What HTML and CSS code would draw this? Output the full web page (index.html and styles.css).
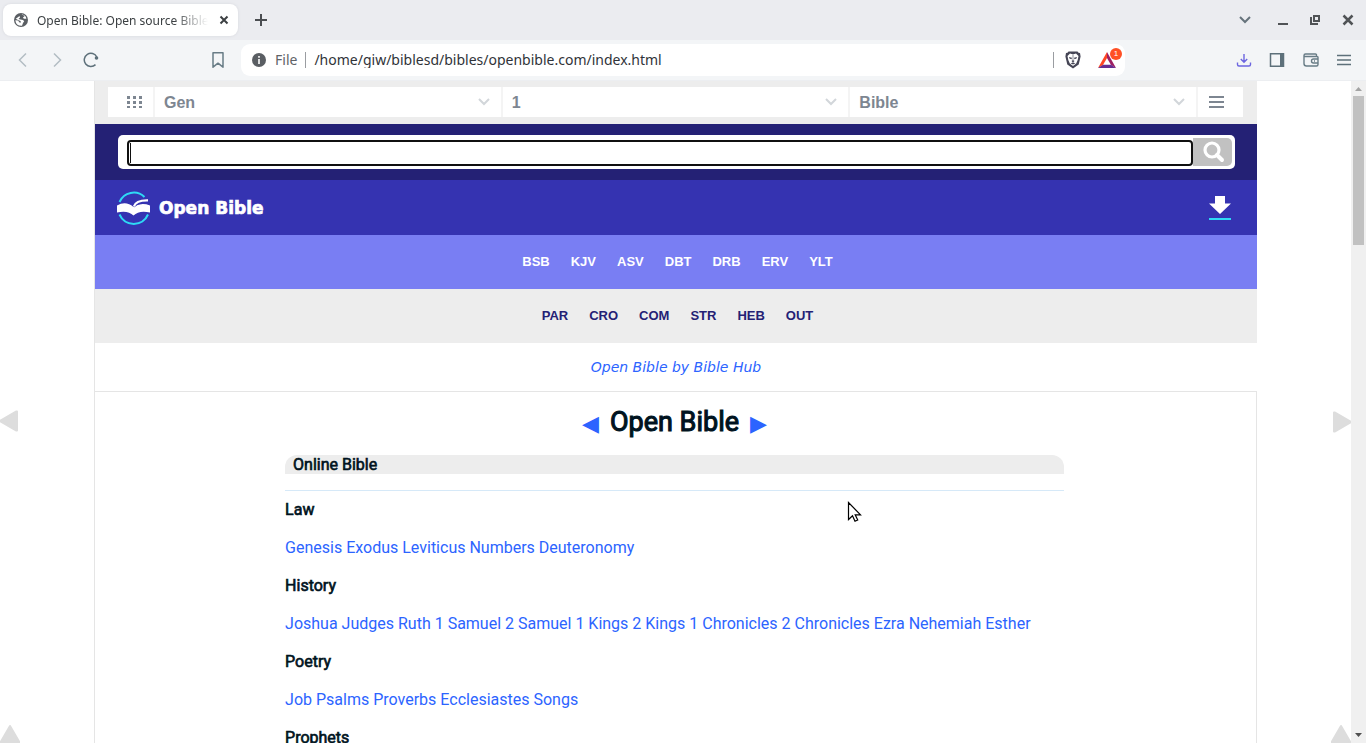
FILE: index.html
```html
<!DOCTYPE html>
<html lang="en">
<head>
<meta charset="utf-8">
<title>Open Bible: Open source Bible</title>
<link rel="stylesheet" href="styles.css">
</head>
<body>
<div class="window">
  <header class="tabs">
    <div class="tab">
      <svg width="16" height="16" viewBox="0 0 16 16"><circle cx="8" cy="8" r="7" fill="#5a5e63"/><path d="M8.500 2.500L6.500 4l.5 1.500L5.500 7l2 .5 2.500.5 1.200 1.200L10 11l-1 2.700Q3 14 2.300 8.200L5 8.500 6.500 10.500 8 10.500 7.500 9 5 8 2.800 6.800" fill="#fff"/><path d="M8.500 2.500l3 1.200c.2 1.300-1.500 1-1.500 2 .1 1 1.800 1 3.300 1.100.1-2-2-4.500-4.800-4.300z" fill="#fff"/></svg>
      <span class="tab-title">Open Bible: Open source Bible</span>
      <button class="icon" aria-label="Close tab"><svg width="10" height="10" viewBox="0 0 10 10" stroke="#3c4043" stroke-width="2"><path d="M1.500 1.500l7 7M8.500 1.500l-7 7"/></svg></button>
    </div>
    <button class="icon new-tab" aria-label="New tab"><svg width="12" height="12" viewBox="0 0 12 12" stroke="#4a4d51" stroke-width="2"><path d="M6 0v12M0 6h12"/></svg></button>
    <div class="window-controls">
      <button class="icon" aria-label="Search tabs"><svg width="12" height="8" viewBox="0 0 12 8" fill="none" stroke="#66737c" stroke-width="2"><path d="M1 1l5 5 5-5"/></svg></button>
      <button class="icon" aria-label="Minimize"><svg width="12" height="12" viewBox="0 0 12 12"><path d="M0 9h10v2H0z" fill="#505356"/></svg></button>
      <button class="icon" aria-label="Restore"><svg width="12" height="12" viewBox="0 0 12 12" fill="none" stroke="#505356" stroke-width="2"><path d="M4 2h5v5H4zM1 3v7h7"/></svg></button>
      <button class="icon" aria-label="Close"><svg width="12" height="12" viewBox="0 0 12 12" stroke="#505356" stroke-width="2.500"><path d="M1.500 1.500l9 9M10.500 1.500l-9 9"/></svg></button>
    </div>
  </header>
  <div class="toolbar">
    <div class="history">
      <button class="icon" aria-label="Back"><svg width="16" height="16" viewBox="0 0 16 16" fill="none" stroke="#b3bdc3" stroke-width="1.500"><path d="M11 1.500L4.500 8l6.500 6.500"/></svg></button>
      <button class="icon" aria-label="Forward"><svg width="16" height="16" viewBox="0 0 16 16" fill="none" stroke="#b3bdc3" stroke-width="1.500"><path d="M5 1.500L11.500 8 5 14.500"/></svg></button>
      <button class="icon" aria-label="Reload"><svg width="16" height="16" viewBox="0 0 16 16" fill="none" stroke="#5d707a" stroke-width="1.500"><path d="M12.500 12.600A6.600 6.600 0 1 1 13.800 5"/><circle cx="13.500" cy="6" r="1.800" fill="#5d707a" stroke="none"/></svg></button>
    </div>
    <button class="icon bookmark" aria-label="Bookmark"><svg width="16" height="18" viewBox="0 0 16 18" fill="none" stroke="#687c86" stroke-width="1.500"><path d="M3 1.800h10v14.400l-5-4-5 4z" stroke-linejoin="round"/></svg></button>
    <div class="address">
      <svg width="14" height="14" viewBox="0 0 14 14"><circle cx="7" cy="7" r="7" fill="#5a5e63"/><path d="M6.200 6h1.600v5H6.200zM6.200 3h1.600v1.800H6.200z" fill="#fff"/></svg>
      <span class="scheme">File</span>
      <input class="url" type="text" aria-label="Address" value="/home/giw/biblesd/bibles/openbible.com/index.html">
      <button class="icon shield" aria-label="Shields"><svg width="16" height="18" viewBox="0 0 16 18"><path d="M3.500.5h9l1 1.200 1.500.4.600 3.400-1.900 8L8 17.500l-5.700-4L.4 5.500 1 2.100l1.500-.4z" fill="#454555"/><path d="M5 2.500l1.500.5h3L11 2.500l2.500 2.500-.8 4-1.500 3.600L8 15l-3.200-2.400L3.300 9l-.8-4z" fill="#fff"/><path d="M4 6l3 .7-.5 1.500L4.500 7.600zM12 6l-3 .7.5 1.500 2-.6zM6.500 10L8 9l1.500 1L8 11.500zM5.500 12.200L8 11.500l2.500.7L8 13.500zM7.700 3h.6v6h-.6z" fill="#454555"/></svg></button>
      <button class="icon rewards" aria-label="Rewards, 1 notification"><svg width="18" height="16" viewBox="0 0 18 16"><path d="M9 0L0 16l5-3 4-7z" fill="#ff4724"/><path d="M9 0l9 16-5-3-4-7z" fill="#9e1f63"/><path d="M0 16h18l-5-3.200H5z" fill="#662d91"/></svg><span class="badge">1</span></button>
    </div>
    <div class="tools">
      <button class="icon" aria-label="Downloads"><svg width="16" height="16" viewBox="0 0 16 16" fill="none" stroke="#6c66e0" stroke-width="1.400"><path d="M8 2v8M4.800 7L8 10.200 11.200 7M1.500 10.500v2q0 1.500 1.500 1.500h10q1.500 0 1.500-1.500v-2"/></svg></button>
      <button class="icon" aria-label="Sidebar"><svg width="16" height="16" viewBox="0 0 16 16"><path d="M1.500 1.700h13v12.600h-13z" fill="none" stroke="#5d707a" stroke-width="1.500"/><path d="M11 1.500h4v13h-4z" fill="#5d707a"/></svg></button>
      <button class="icon" aria-label="Wallet"><svg width="18" height="16" viewBox="0 0 18 16" fill="none" stroke="#687c86" stroke-width="1.400"><path d="M14.500 4.500V3q0-1-1-1H3.500Q2 2 2 3.500v8q0 2.500 2.500 2.500h10q1.500 0 1.500-1.500v-7q0-1-1-1H3.500Q2 4.500 2 3.500M16 7h-4.500q-2 0-2 2t2 2H16M12 9h1"/></svg></button>
      <button class="icon" aria-label="Menu"><svg width="14" height="12" viewBox="0 0 14 12" stroke="#5d707a" stroke-width="1.400"><path d="M0 1.500h14M0 6h14M0 10.500h14"/></svg></button>
    </div>
  </div>

  <div class="viewport">
    <div class="page">
      <div class="column">
        <div class="picker">
          <button class="cell cell-icon" aria-label="Books"><svg width="16" height="14" viewBox="0 0 16 14" fill="#7d8691"><path d="M0 1h3v3H0zM6 1h3v3H6zM12 1h3v3h-3zM0 6h3v3H0zM6 6h3v3H6zM12 6h3v3h-3zM0 11h3v2H0zM6 11h3v2H6zM12 11h3v2h-3z"/></svg></button>
          <label class="cell"><select aria-label="Book"><option>Gen</option></select><svg class="chevron" viewBox="0 0 12 8"><path d="M1 1l5 5 5-5"/></svg></label>
          <label class="cell"><select aria-label="Chapter"><option>1</option></select><svg class="chevron" viewBox="0 0 12 8"><path d="M1 1l5 5 5-5"/></svg></label>
          <label class="cell"><select aria-label="Version"><option>Bible</option></select><svg class="chevron" viewBox="0 0 12 8"><path d="M1 1l5 5 5-5"/></svg></label>
          <button class="cell cell-icon" aria-label="Site menu"><svg width="16" height="14" viewBox="0 0 16 14" fill="#7d8691"><path d="M0 1h15v2H0zM0 6h15v2H0zM0 11h15v2H0z"/></svg></button>
        </div>
        <form class="search">
          <div class="search-box">
            <input type="text" aria-label="Search">
            <button type="button" aria-label="Search"><svg width="22" height="22" viewBox="0 0 22 22" fill="none" stroke="#fff"><circle cx="9" cy="9" r="7" stroke-width="3.200"/><path d="M14 14l5 5" stroke-width="4" stroke-linecap="round"/></svg></button>
          </div>
        </form>
        <div class="brand">
          <a class="logo" href="#">
            <svg width="34" height="34" viewBox="0 0 34 34"><g fill="none" stroke="#2ed9f5" stroke-width="2"><path d="M2.500 11A15.500 15.500 0 0 1 27.500 6M2.500 23.500a15.500 15.500 0 0 0 28.500 0"/></g><path d="M0 14.500Q9 9.500 16.500 16 24 11 33 14.500V21.500Q22 19 16.500 24.500 11 19 0 21.500z" fill="#fff"/><path d="M17 16Q19.500 11.500 31 11.500" fill="none" stroke="#3533b1" stroke-width="1.500"/><path d="M16.800 15.500Q19 9 31 9.300" fill="none" stroke="#fff" stroke-width="2.200"/></svg>
            <span>Open Bible</span>
          </a>
          <a class="download" href="#" aria-label="Download"><svg width="22" height="24" viewBox="0 0 22 24"><path d="M6 0h10v7.500h6L11 18 0 7.500h6z" fill="#fff"/><path d="M0 22h22v2H0z" fill="#2ed9f5"/></svg></a>
        </div>
        <nav class="versions"><a href="#">BSB</a><a href="#">KJV</a><a href="#">ASV</a><a href="#">DBT</a><a href="#">DRB</a><a href="#">ERV</a><a href="#">YLT</a></nav>
        <nav class="versions studies"><a href="#">PAR</a><a href="#">CRO</a><a href="#">COM</a><a href="#">STR</a><a href="#">HEB</a><a href="#">OUT</a></nav>
        <p class="credit"><a href="#">Open Bible by Bible Hub</a></p>
        <main class="content">
          <div class="inner">
            <h1><a href="#">◀</a> Open Bible <a href="#">▶</a></h1>
            <h2>Online Bible</h2>
            <hr>
            <h3>Law</h3>
            <p><a href="#">Genesis</a> <a href="#">Exodus</a> <a href="#">Leviticus</a> <a href="#">Numbers</a> <a href="#">Deuteronomy</a></p>
            <h3>History</h3>
            <p><a href="#">Joshua</a> <a href="#">Judges</a> <a href="#">Ruth</a> <a href="#">1 Samuel</a> <a href="#">2 Samuel</a> <a href="#">1 Kings</a> <a href="#">2 Kings</a> <a href="#">1 Chronicles</a> <a href="#">2 Chronicles</a> <a href="#">Ezra</a> <a href="#">Nehemiah</a> <a href="#">Esther</a></p>
            <h3>Poetry</h3>
            <p><a href="#">Job</a> <a href="#">Psalms</a> <a href="#">Proverbs</a> <a href="#">Ecclesiastes</a> <a href="#">Songs</a></p>
            <h3>Prophets</h3>
          </div>
        </main>
      </div>
      <a class="float prev" href="#" aria-label="Previous"><svg width="18" height="22" viewBox="0 0 18 22"><path d="M0 11L16 1.500h1v19h-1z" fill="#ddd" stroke="#ddd" stroke-width="2" stroke-linejoin="round"/></svg></a>
      <a class="float next" href="#" aria-label="Next"><svg width="18" height="22" viewBox="0 0 18 22"><path d="M18 11L2 1.500H1v19h1z" fill="#ddd" stroke="#ddd" stroke-width="2" stroke-linejoin="round"/></svg></a>
      <a class="float top-left" href="#" aria-label="Top of page"><svg width="20" height="18" viewBox="0 0 20 18"><path d="M10 1L1 16.500V18h18v-1.500z" fill="#ddd" stroke="#ddd" stroke-width="2" stroke-linejoin="round"/></svg></a>
      <a class="float top-right" href="#" aria-label="Top of page"><svg width="20" height="18" viewBox="0 0 20 18"><path d="M10 1L1 16.500V18h18v-1.500z" fill="#ddd" stroke="#ddd" stroke-width="2" stroke-linejoin="round"/></svg></a>
      <svg class="pointer" width="16" height="22" viewBox="0 0 16 22"><path d="M1.500 1.500v17l4-3.800 2.500 5.500 2.700-1.200-2.500-5.200h5.300z" fill="#fff" stroke="#000" stroke-width="1.200"/></svg>
    </div>
    <div class="scrollbar">
      <svg width="15" height="15" viewBox="0 0 15 15"><path d="M4 10h7L7.500 6z" fill="#a3a3a3"/></svg>
      <div class="thumb"></div>
      <svg width="15" height="15" viewBox="0 0 15 15"><path d="M4 5h7L7.500 9z" fill="#505050"/></svg>
    </div>
  </div>
</div>
</body>
</html>
```

FILE: styles.css
```css
* { box-sizing: border-box; }
body { margin: 0; background: #fff; }
svg { display: block; flex: none; }
a { color: #2c64ff; text-decoration: none; }
button { border: 0; background: none; padding: 0; }
.icon { display: grid; place-items: center; flex: none; }

.window { display: flex; flex-direction: column; height: 100vh; overflow: hidden; font-family: "Noto Sans", sans-serif; }

/* Browser tabs */
.tabs { display: flex; align-items: center; height: 40px; padding: 0 12px 0 3px; background: #ebecf0; flex: none; }
.tab { display: flex; align-items: center; width: 235px; height: 32px; padding: 0 9px 0 10px; border-radius: 8px; background: #fff; box-shadow: 0 0 3px #d5d7dc; }
.tab-title { flex: 1; overflow: hidden; white-space: nowrap; margin: 0 11px 0 8px; font-size: 12px; color: #3c4043; -webkit-mask-image: linear-gradient(to right, #000 80%, transparent); mask-image: linear-gradient(to right, #000 80%, transparent); }
.new-tab { margin-left: 17px; }
.window-controls { display: flex; align-items: center; gap: 20px; margin-left: auto; }
.window-controls .icon:first-child { margin-right: 7px; }

/* Browser toolbar */
.toolbar { display: flex; align-items: center; height: 41px; padding: 0 15px; background: #f3f5f7; border-bottom: 1px solid #eceef1; flex: none; }
.history { display: flex; gap: 18px; }
.bookmark { margin-left: 111px; }
.address { display: flex; align-items: center; flex: 1; height: 32px; margin: 0 111px 0 15px; padding: 0 9px 0 11px; border-radius: 9px; background: #fff; }
.scheme { margin: 0 8px 0 9px; padding-right: 8px; border-right: 1px solid #9a9da1; font-size: 14px; line-height: 16px; color: #5f6368; }
.url { flex: 1; min-width: 0; height: 16px; padding: 0 0 2px; border: 0; border-right: 1px solid #9a9da1; font: 14px "Noto Sans", sans-serif; color: #303338; background: none; }
.shield { margin: 0 17px 0 11px; }
.rewards { position: relative; }
.badge { position: absolute; right: -6px; top: -4px; width: 12px; height: 12px; border-radius: 6px; background: #ff5025; color: #fff; font-size: 8px; line-height: 12px; text-align: center; }
.tools { display: flex; align-items: center; gap: 17px; }

/* Viewport */
.viewport { display: flex; flex: 1; min-height: 0; }
.page { position: relative; flex: 1; min-width: 0; padding: 0 94px; overflow: hidden; }
.column { min-height: 100%; border-left: 1px solid #e5e5e5; }
.scrollbar { display: flex; flex-direction: column; width: 15px; background: #f0f0f0; }
.thumb { height: 149px; margin: 0 2px auto; background: #c1c1c1; }

.picker { display: flex; gap: 2px; padding: 6px 14px 7px 13px; background: #ededed; }
.cell { display: grid; flex: 1; align-items: center; height: 30px; background: #fff; box-shadow: 2px 0 0 #f4f4f4; }
.cell-icon { flex: 0 0 45px; place-items: center; padding-left: 9px; }
.cell-icon:last-child { padding: 0 8px 0 0; box-shadow: none; }
.cell select { grid-area: 1 / 1; width: 100%; height: 30px; padding: 0 9px; border: 0; background: none; appearance: none; font: bold 16px "Liberation Sans", sans-serif; color: #7d8691; }
.chevron { grid-area: 1 / 1; justify-self: end; width: 12px; height: 8px; margin-right: 11px; fill: none; stroke: #d2d6da; stroke-width: 2; pointer-events: none; }

.search { padding: 11px 22px 11px 23px; background: #242175; }
.search-box { display: flex; align-items: center; height: 34px; padding: 3px 3px 3px 9px; border-radius: 5px; background: #fff; }
.search-box input { flex: 1; min-width: 0; height: 26px; margin-top: 2px; padding: 0 4px; border: 2px solid #101010; border-radius: 4px; outline: 0; background: linear-gradient(#101010, #101010) 1px 50% / 1px 20px no-repeat #fff; }
.search-box button { display: grid; place-items: center; width: 39px; height: 28px; padding-left: 2px; border-radius: 0 5px 5px 0; background: #c1c1c1; }

.brand { display: flex; justify-content: space-between; align-items: center; height: 55px; padding: 0 26px 0 22px; background: #3533b1; }
.logo { display: flex; align-items: center; gap: 8px; color: #fff; font: bold 17px "DejaVu Sans", sans-serif; -webkit-text-stroke: 0.04em #fff; }

.versions { display: flex; justify-content: center; align-items: center; gap: 21px; height: 54px; padding: 0 0 2px 3px; background: #797ef3; font: bold 13px "Liberation Sans", sans-serif; }
.versions a { color: #fff; }
.versions.studies { background: #ededed; }
.studies a { color: #242175; }

.credit { margin: 0; border-bottom: 1px solid #e5e5e5; text-align: center; font: italic 14px/48px "DejaVu Sans", sans-serif; }
.content { min-height: 352px; padding-right: 2px; border-right: 1px solid #e5e5e5; font: 16px/18px Roboto, sans-serif; color: #001320; }
.inner { width: 67.2%; margin: 0 auto; padding-top: 12px; }
h1, h2, h3 { margin: 0; font-weight: normal; -webkit-text-stroke: 0.04em currentColor; }
h1 { text-align: center; font-size: 27px; line-height: 36px; }
h1 a { font-size: 22px; margin: 0 4px; -webkit-text-stroke: 0; }
h2 { margin-top: 13px; padding: 0 8px; border-radius: 12px 12px 0 0; background: #ededed; font-size: 16px; line-height: 19px; }
hr { margin: 16px 0 10px; border: 0; border-top: 1px solid #d6e9f8; }
h3 { font-size: 16px; line-height: 18px; }
.content p { margin: 20px 0; }

.float { position: absolute; }
.prev { left: 0; top: 329px; }
.next { right: 0; top: 330px; }
.top-left { left: 0; bottom: 0; }
.top-right { right: 0; bottom: 0; }
.pointer { position: absolute; left: 847px; top: 420px; }
```
